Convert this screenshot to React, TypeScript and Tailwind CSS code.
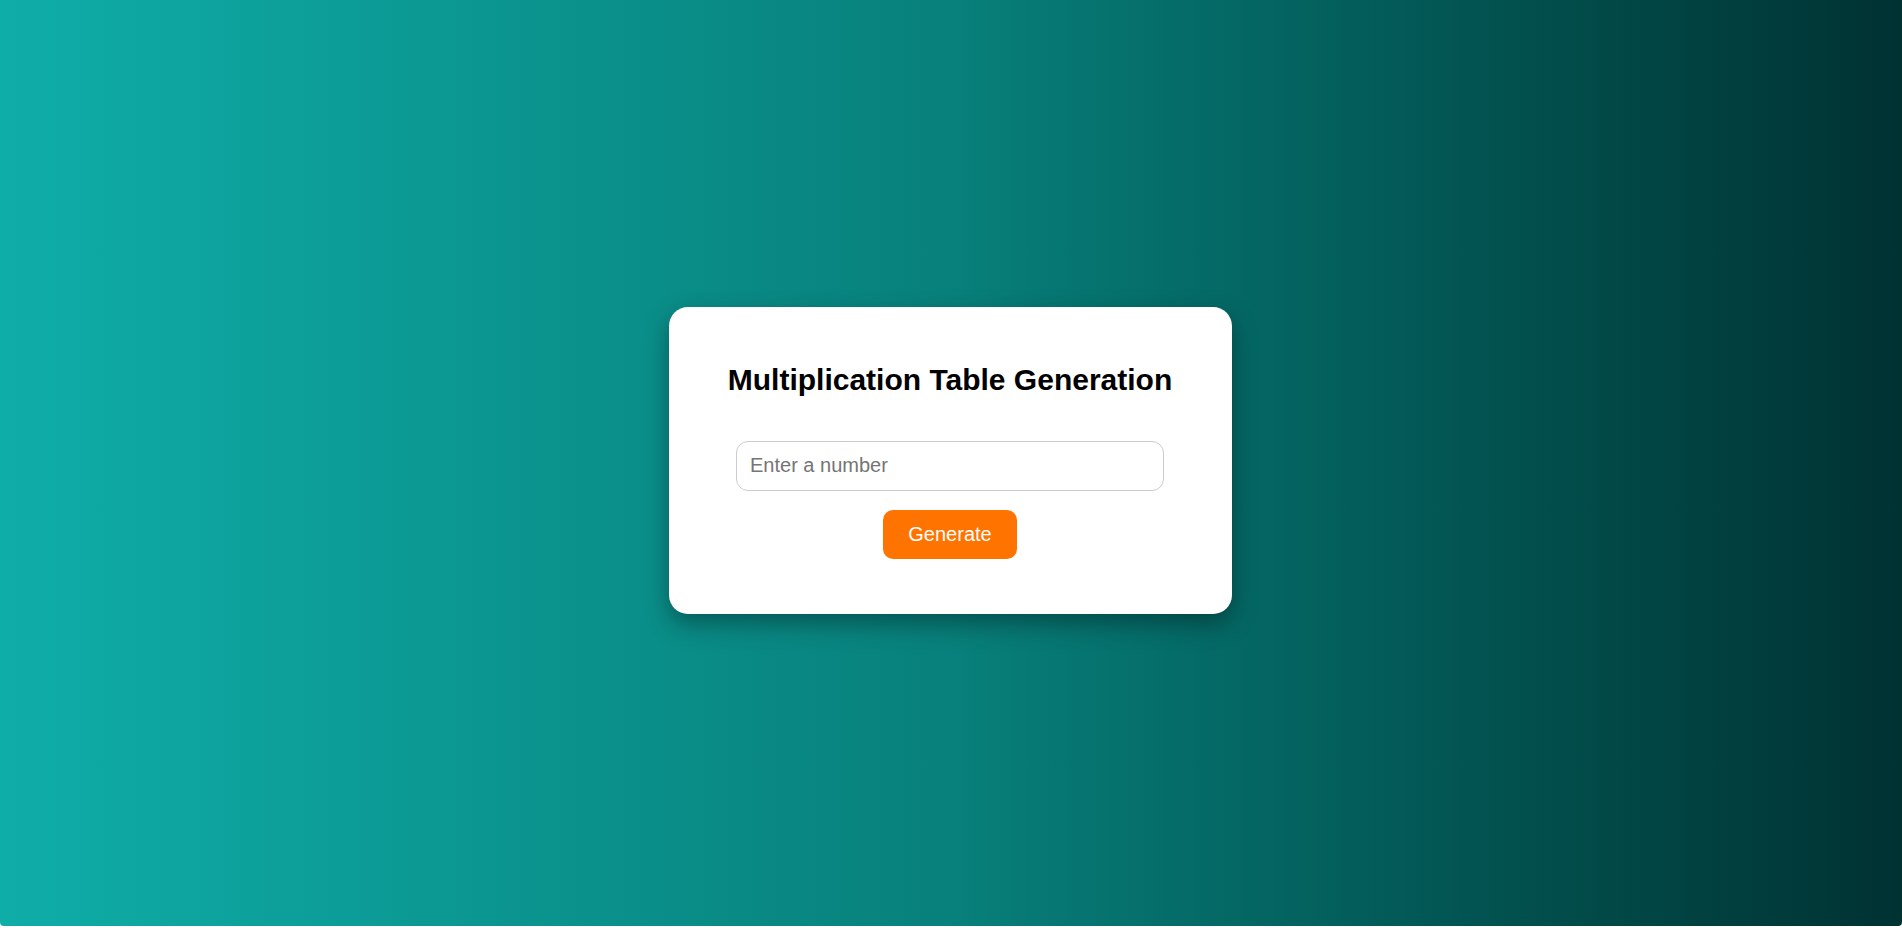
import React from "react";

export default function App() {
  return (
    <div className="w-full h-[928px] bg-white" style={{ fontFamily: '"Liberation Sans", Arial, sans-serif' }}>
      <div className="w-full h-[926px] rounded-b-[4px] bg-gradient-to-r from-[#0fada8] via-[#08807b] to-[#003232] flex items-center justify-center">
        <div className="w-[563px] h-[307px] bg-white rounded-[19px] shadow-[0_10px_25px_rgba(0,0,0,0.35)] flex flex-col items-center pt-[56px] mb-[5px] mr-[2px]">
          <h2 className="text-[30px] leading-[34px] font-bold text-black m-0">Multiplication Table Generation</h2>
          <input
            type="number"
            placeholder="Enter a number"
            className="mt-[44px] w-[428px] h-[50px] border border-[#cccccc] rounded-[12px] px-[13px] pb-[2px] text-[20px] text-black placeholder:text-[#757575] outline-none bg-white"
          />
          <button className="mt-[19px] w-[134px] h-[49px] rounded-[10px] bg-[#ff7300] text-white text-[20px] leading-none pb-[2px]">
            Generate
          </button>
        </div>
      </div>
    </div>
  );
}
